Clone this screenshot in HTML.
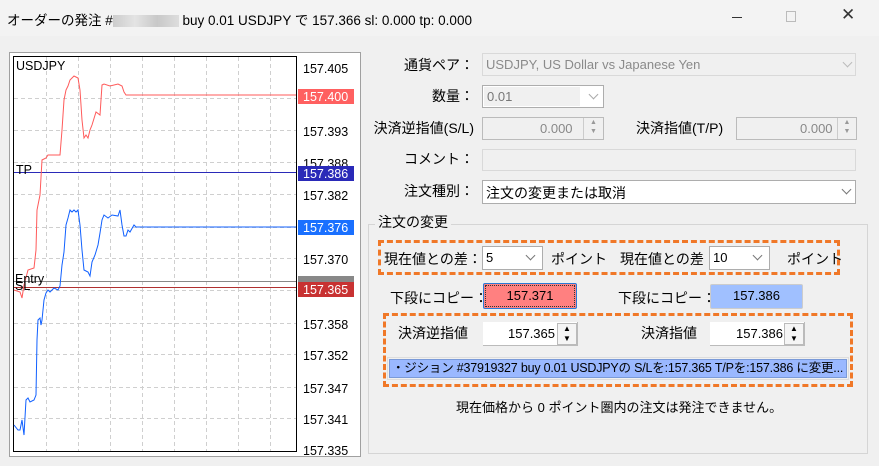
<!DOCTYPE html>
<html><head><meta charset="utf-8"><style>
*{margin:0;padding:0;box-sizing:border-box}
body{width:879px;height:466px;background:#f0f0f0;font-family:"Liberation Sans","Noto Sans CJK JP",sans-serif;font-size:13px;color:#000;position:relative;overflow:hidden}
.a{position:absolute;white-space:nowrap}
.fld{position:absolute;border:1px solid #d9d9d9;background:#f0f0f0}
.sel{position:absolute;border:1px solid #adadad;background:#fff}
.chev{position:absolute;width:7px;height:7px;border-right:1px solid #777;border-bottom:1px solid #777;transform:rotate(45deg)}
.lbl{position:absolute;text-align:right;white-space:nowrap;line-height:16px;font-size:14px}
.spin{position:absolute;border-left:1px solid #ccc;background:#f0f0f0}
.dash{position:absolute;border:3px dashed #f07828}
.j{font-size:14px}
</style></head><body>
<div class="a" style="left:0;top:0;width:879px;height:36px;background:#f3f3f3"></div>
<div class="a" style="left:7px;top:9px;font-size:13.5px">オーダーの発注 #<span style="display:inline-block;width:66px;height:12px;background:linear-gradient(90deg,#ccc,#e4e4e4,#c8c8c8,#ddd);vertical-align:middle"></span> buy 0.01 USDJPY で 157.366 sl: 0.000 tp: 0.000</div>
<div class="a" style="left:732px;top:17px;width:10px;border-top:1px solid #333"></div>
<div class="a" style="left:786px;top:11px;width:10px;height:11px;border:1px solid #bbb"></div>
<div class="a" style="left:841px;top:5px;font-size:17px;color:#333">✕</div>

<svg class="a" style="left:9px;top:52px" width="352" height="405" viewBox="9 52 352 405">
<rect x="9.5" y="52.5" width="351" height="404" fill="#fff" stroke="#a0a0a0"/>
<g stroke="#cfcfcf" stroke-dasharray="4,3" stroke-width="1">
<path d="M46.5 57V451M78.5 57V451M110.5 57V451M142.5 57V451M174.5 57V451M206.5 57V451M238.5 57V451M270.5 57V451"/>
<path d="M14 98.5H296M14 130.5H296M14 162.5H296M14 194.5H296M14 227.5H296M14 258.5H296M14 290.5H296M14 323.5H296M14 354.5H296M14 387.5H296M14 418.5H296"/>
</g>
<rect x="13.5" y="56.5" width="283" height="395" fill="none" stroke="#000"/>
<line x1="14" y1="172.5" x2="296" y2="172.5" stroke="#2a2ab8"/>
<line x1="14" y1="281.5" x2="296" y2="281.5" stroke="#888"/>
<line x1="14" y1="287.5" x2="296" y2="287.5" stroke="#b03030"/>
<polyline fill="none" stroke="#ff5a5a" points="14,290 20,292 22,298 24,285 28,270 34,268 36,250 37,210 40,195 42,160 46,158 48,155 60,155 62,130 64,100 66,90 68,86 70,80 72,78 74,76 78,78 80,90 82,120 84,138 86,135 88,138 90,130 92,125 96,112 100,115 102,85 104,84 110,86 118,84 122,86 124,92 126,95 128,95 296,95"/>
<polyline fill="none" stroke="#1060ff" points="14,425 18,430 20,430 22,420 24,435 26,400 28,398 30,402 34,400 36,395 37,340 38,320 40,318 41,325 42,320 44,300 46,293 48,290 50,292 54,288 58,290 60,286 62,265 64,252 66,225 68,218 70,210 72,212 74,210 76,212 78,210 80,225 82,250 84,270 88,272 90,276 92,262 95,255 98,245 100,233 102,220 104,215 108,218 112,215 118,216 120,210 122,225 124,236 126,236 128,230 130,232 134,225 136,227 296,227"/>
<g font-family="Liberation Sans" font-size="12.5" fill="#000">
<text x="16" y="70">USDJPY</text><text x="16" y="174">TP</text><text x="15" y="283">Entry</text><text x="15" y="290">SL</text>
<text x="303" y="73">157.405</text><text x="303" y="136">157.393</text><text x="303" y="168">157.388</text><text x="303" y="200">157.382</text><text x="303" y="264">157.370</text><text x="303" y="329">157.358</text><text x="303" y="360">157.352</text><text x="303" y="393">157.347</text><text x="303" y="424">157.341</text><text x="303" y="455">157.335</text>
</g>
<rect x="298" y="89" width="56" height="15" fill="#ff6060"/><text x="303" y="101" font-size="12.5" fill="#fff" font-family="Liberation Sans">157.400</text>
<rect x="298" y="166" width="56" height="15" fill="#2a2ab8"/><text x="303" y="178" font-size="12.5" fill="#fff" font-family="Liberation Sans">157.386</text>
<rect x="298" y="220" width="56" height="15" fill="#1a70ff"/><text x="303" y="232" font-size="12.5" fill="#fff" font-family="Liberation Sans">157.376</text>
<rect x="298" y="276" width="56" height="7" fill="#888"/>
<rect x="298" y="282" width="56" height="15" fill="#c83232"/><text x="303" y="294" font-size="12.5" fill="#fff" font-family="Liberation Sans">157.365</text>
</svg>

<div class="lbl" style="right:405px;top:57px">通貨ペア：</div>
<div class="fld" style="left:482px;top:53px;width:374px;height:23px"></div>
<div class="a" style="left:486px;top:57px;color:#8a8a8a">USDJPY, US Dollar vs Japanese Yen</div>
<div class="chev" style="left:844px;top:59px;border-color:#bbb"></div>

<div class="lbl" style="right:405px;top:88px">数量：</div>
<div class="sel" style="left:482px;top:85px;width:122px;height:23px"></div>
<div class="a" style="left:484px;top:87px;width:96px;height:19px;background:#f0f0f0"></div>
<div class="a" style="left:487px;top:89px;color:#777">0.01</div>
<div class="chev" style="left:590px;top:91px;border-color:#aaa"></div>

<div class="lbl" style="right:405px;top:120px">決済逆指値(S/L)</div>
<div class="fld" style="left:482px;top:117px;width:122px;height:23px;border-color:#bbb"></div>
<div class="a" style="left:540px;top:121px;color:#888">0.000</div>
<div class="spin" style="left:583px;top:118px;width:20px;height:21px;font-size:7px;color:#999;text-align:center;line-height:9px">▲<br>▼</div>
<div class="lbl" style="left:636px;top:120px">決済指値(T/P)</div>
<div class="fld" style="left:736px;top:117px;width:121px;height:23px;border-color:#bbb"></div>
<div class="a" style="left:800px;top:121px;color:#888">0.000</div>
<div class="spin" style="left:837px;top:118px;width:19px;height:21px;font-size:7px;color:#999;text-align:center;line-height:9px">▲<br>▼</div>

<div class="lbl" style="right:405px;top:151px">コメント：</div>
<div class="fld" style="left:482px;top:149px;width:374px;height:22px"></div>

<div class="lbl" style="right:405px;top:183px">注文種別：</div>
<div class="sel" style="left:482px;top:180px;width:374px;height:24px"></div>
<div class="a j" style="left:486px;top:183px">注文の変更または取消</div>
<div class="chev" style="left:843px;top:186px"></div>

<div class="a" style="left:368px;top:224px;width:500px;height:230px;border:1px solid #d5d5d5"></div>
<div class="a j" style="left:375px;top:214px;background:#f0f0f0;padding:0 3px;line-height:16px">注文の変更</div>

<div class="dash" style="left:378px;top:240px;width:462px;height:35px"></div>
<div class="a j" style="left:384px;top:249px">現在値との差：</div>
<div class="sel" style="left:482px;top:246px;width:61px;height:24px"></div>
<div class="a" style="left:486px;top:250px">5</div>
<div class="chev" style="left:527px;top:252px"></div>
<div class="a j" style="left:551px;top:249px">ポイント</div>
<div class="a j" style="left:620px;top:249px">現在値との差</div>
<div class="sel" style="left:709px;top:246px;width:61px;height:24px"></div>
<div class="a" style="left:713px;top:250px">10</div>
<div class="chev" style="left:754px;top:252px"></div>
<div class="a j" style="left:787px;top:249px">ポイント</div>

<div class="a j" style="left:390px;top:288px">下段にコピー：</div>
<div class="a" style="left:483px;top:283px;width:94px;height:26px;border:1px solid #2a7ad8;border-radius:2px;background:#ff8080"><div style="margin:1px;height:22px;border:1px dotted #333;text-align:center;line-height:20px">157.371</div></div>
<div class="a j" style="left:618px;top:288px">下段にコピー：</div>
<div class="a" style="left:710px;top:284px;width:93px;height:25px;border:1px solid #ccc;border-radius:2px;background:#a0c0ff;text-align:center;line-height:22px">157.386</div>

<div class="dash" style="left:383px;top:313px;width:470px;height:74px"></div>
<div class="j" style="position:absolute;left:398px;top:324px;height:21px;overflow:hidden;line-height:18px">決済逆指値<br>(S/L)</div>
<div class="a" style="left:483px;top:322px;width:95px;height:24px;background:#fff;border-right:1px solid #bbb;border-bottom:1px solid #bbb"></div>
<div class="a" style="left:508px;top:326px">157.365</div>
<div class="a" style="left:557px;top:323px;width:20px;height:22px;border:1px solid #bbb;background:#f5f5f5;font-size:8px;text-align:center;line-height:10px">▲<br>▼</div>
<div class="j" style="position:absolute;left:641px;top:324px;height:21px;overflow:hidden;line-height:18px">決済指値<br>(T/P)</div>
<div class="a" style="left:710px;top:322px;width:95px;height:24px;background:#fff;border-right:1px solid #bbb;border-bottom:1px solid #bbb"></div>
<div class="a" style="left:736px;top:326px">157.386</div>
<div class="a" style="left:784px;top:323px;width:20px;height:22px;border:1px solid #bbb;background:#f5f5f5;font-size:8px;text-align:center;line-height:10px">▲<br>▼</div>

<div class="a" style="left:387px;top:357px;width:462px;height:23px;border:1px solid #ddd;padding:1px"><div style="height:19px;background:#9ab8ff;border:1px solid #7a9ad8;line-height:17px;padding-left:2px;overflow:hidden;text-overflow:ellipsis;font-size:12.5px;letter-spacing:-0.2px">・ジション #37919327 buy 0.01 USDJPYの S/Lを:157.365 T/Pを:157.386 に変更...</div></div>

<div class="a" style="left:456px;top:397px">現在価格から 0 ポイント圏内の注文は発注できません。</div>
</body></html>
